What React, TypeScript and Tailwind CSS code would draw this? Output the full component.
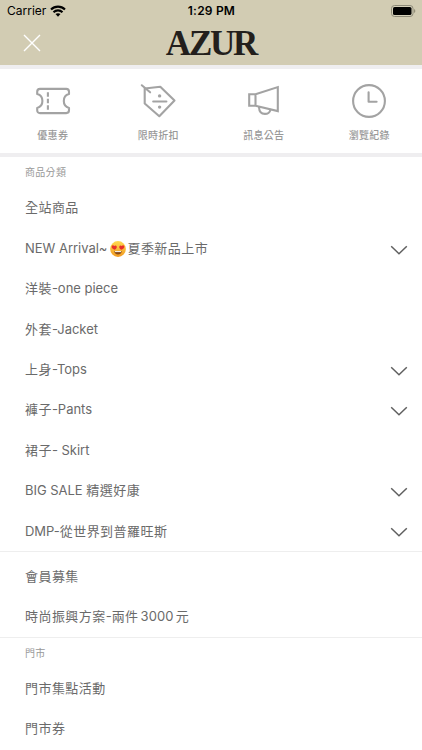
import { Fragment, type ReactNode } from 'react';
import clsx from 'clsx';

interface MenuItem {
  label: string;
  expandable?: boolean;
}

interface Shortcut {
  label: string;
  icon: ReactNode;
}

const iconProps = {
  width: 36,
  height: 36,
  viewBox: '0 0 36 36',
  fill: 'none',
  stroke: '#a3a3a3',
  strokeWidth: 2.1,
  strokeLinecap: 'round',
  strokeLinejoin: 'round',
} as const;

function TicketIcon() {
  return (
    <svg {...iconProps}>
      <path d="M5 5.900h26.200c1.800 0 2.800 1 2.800 2.800v2.400c-3 .8-5.200 3.500-5.200 6.900s2.200 6.100 5.200 6.900v2.400c0 1.800-1 2.800-2.800 2.800H5c-1.800 0-2.800-1-2.800-2.800v-2.400c3-.8 5.200-3.500 5.200-6.900s-2.200-6.100-5.200-6.900V8.700c0-1.800 1-2.800 2.800-2.800z" />
      <path d="M12.900 9.300v4.400M12.900 15.800v4.400M12.900 22.300v4.400" strokeLinecap="butt" />
    </svg>
  );
}

function DiscountIcon() {
  return (
    <svg {...iconProps}>
      <path d="M4.700 5.500L20.300 3.800l14.200 13.700-15.200 15.700L4.700 20.500z" />
      <path d="M1.800 2.300l8.300 7M13.200 18.500h13.200" />
      <circle cx="19.600" cy="12.900" r="1.700" fill="#a3a3a3" stroke="none" />
      <circle cx="19.600" cy="24.100" r="1.700" fill="#a3a3a3" stroke="none" />
    </svg>
  );
}

function MegaphoneIcon() {
  return (
    <svg {...iconProps} strokeLinejoin="miter">
      <path d="M3.200 11.200h6.300v11.600H3.200zM9.500 11.200l22.300-7.100v24L9.500 22.800" />
      <path d="M13 24.200c.2 4.500 2.600 6.700 5.900 6.700 2.800 0 4.800-1.400 5.500-4" />
    </svg>
  );
}

function HistoryIcon() {
  return (
    <svg {...iconProps}>
      <circle cx="18" cy="18" r="15.900" />
      <path d="M17.600 9.300v9.500h8" />
    </svg>
  );
}

function HeartEyes() {
  return (
    <svg width="16" height="16" viewBox="0 0 16 16" className="mr-px ml-[3px] shrink-0">
      <defs>
        <linearGradient id="face" x1="0" y1="0" x2="0" y2="1">
          <stop offset="0" stopColor="#ffd94f" />
          <stop offset="1" stopColor="#f29a22" />
        </linearGradient>
      </defs>
      <circle cx="8" cy="8" r="7.900" fill="url(#face)" />
      <path d="M4.300 10h7.400c0 2.200-1.500 3.400-3.700 3.400S4.300 12.200 4.300 10z" fill="#8a4a14" />
      <path d="M4.900 10.100h6.200v1H4.900z" fill="#fff" />
      <path d="M4.500 8.800C2.500 7.700 1.300 6.500 1.700 5.200c.4-1.100 1.800-1.200 2.500-.2.800-.9 2.200-.7 2.500.4.400 1.300-.5 2.400-2.200 3.400z" fill="#e8302b" />
      <path d="M11.500 8.800c2-1.100 3.200-2.300 2.800-3.600-.4-1.100-1.800-1.200-2.500-.2-.8-.9-2.200-.7-2.500.4-.4 1.300.5 2.400 2.200 3.400z" fill="#e8302b" />
    </svg>
  );
}

const SHORTCUTS: Shortcut[] = [
  { label: '優惠券', icon: <TicketIcon /> },
  { label: '限時折扣', icon: <DiscountIcon /> },
  { label: '訊息公告', icon: <MegaphoneIcon /> },
  { label: '瀏覽紀錄', icon: <HistoryIcon /> },
];

// ":heart_eyes:" is swapped for the drawn emoji
const CATEGORIES: MenuItem[] = [
  { label: '全站商品' },
  { label: 'NEW Arrival~:heart_eyes:夏季新品上市', expandable: true },
  { label: '洋裝-one piece' },
  { label: '外套-Jacket' },
  { label: '上身-Tops', expandable: true },
  { label: '褲子-Pants', expandable: true },
  { label: '裙子- Skirt' },
  { label: 'BIG SALE 精選好康', expandable: true },
  { label: 'DMP-從世界到普羅旺斯', expandable: true },
];

const CAMPAIGNS: MenuItem[] = [{ label: '會員募集' }, { label: '時尚振興方案-兩件3000元' }];

const STORES: MenuItem[] = [{ label: '門市集點活動' }, { label: '門市券' }];

// Latin runs sit tighter than the Chinese text around them
function Label({ text }: { text: string }) {
  return (
    <span className="flex items-center text-[13px] tracking-[0.45px] whitespace-pre">
      {text.split(/(:heart_eyes:|\d+|[A-Za-z~\- ]+)/).map((part, i) => {
        if (part === ':heart_eyes:') return <HeartEyes key={i} />;
        if (/^\d/.test(part)) return <span key={i} className="mr-[2px] ml-[2px] tracking-[0.1px]">{part}</span>;
        if (/^[A-Za-z\- ]/.test(part)) return <span key={i} className="tracking-[-0.02px]">{part}</span>;
        return <Fragment key={i}>{part}</Fragment>;
      })}
    </span>
  );
}

function StatusBar() {
  return (
    <div className="grid h-[22px] grid-cols-3 items-center pr-[6px] pl-[7px] text-black">
      <div className="flex items-center gap-[4px] text-[12px]">
        Carrier
        <svg width="16" height="12" viewBox="0 0 16 12" fill="none" stroke="#000" strokeWidth="2.100">
          <path d="M1 4.600c3.900-4 10.100-4 14 0M3.500 7.200c2.500-2.500 6.500-2.500 9 0" />
          <path d="M5.500 9.100c1.400-1.300 3.600-1.300 5 0L8 11.700z" fill="#000" stroke="none" />
        </svg>
      </div>
      <div className="text-center text-[12px] font-semibold tracking-[0.2px]">1:29 PM</div>
      <div className="flex justify-end">
        <svg width="25" height="12" viewBox="0 0 25 12">
          <rect x=".5" y=".5" width="21.500" height="11" rx="3" fill="#d5d0b9" stroke="#8d8a78" />
          <rect x="2" y="2" width="18.500" height="8" rx="1.600" fill="#000" />
          <path d="M23.300 4v4c1.300-.7 1.300-3.300 0-4z" fill="#77745f" />
        </svg>
      </div>
    </div>
  );
}

function Menu({ items, className }: { items: MenuItem[]; className?: string }) {
  return (
    <ul className={clsx('pr-[14px] pl-[25px]', className)}>
      {items.map(item => (
        <li key={item.label} className="flex h-[40.4px] items-center justify-between">
          <Label text={item.label} />
          {item.expandable && (
            <svg width="18" height="10" viewBox="0 0 18 10" className="mt-[2px]" fill="none" stroke="#606060" strokeWidth="1.500">
              <path d="M1.200 1.200L9 8.700l7.800-7.500" />
            </svg>
          )}
        </li>
      ))}
    </ul>
  );
}

export default function App() {
  return (
    <div className="h-[750px] w-[422px] overflow-hidden bg-white font-['Inter','Noto_Sans_CJK_TC',sans-serif] text-[#6a6a6a]">
      <header className="h-[65px] bg-[#d2ccb3]">
        <StatusBar />
        <div className="grid h-[43px] grid-cols-[1fr_auto_1fr] items-center">
          <svg width="18" height="18" viewBox="0 0 18 18" className="-mt-[2px] ml-[23px]" stroke="#fff" strokeWidth="1.400">
            <path d="M1 1l16 16M17 1L1 17" />
          </svg>
          <h1 className="-mt-px text-center font-['Liberation_Serif',serif] text-[35px] leading-[43px] font-bold tracking-[-2.2px] text-[#231f1c]">AZUR</h1>
        </div>
      </header>

      <nav className="grid h-[92px] grid-cols-4 border-y-4 border-[#efeef0] pt-[14px]">
        {SHORTCUTS.map(s => (
          <div key={s.label} className="flex flex-col items-center">
            {s.icon}
            <span className="mt-[8px] text-[10px] leading-[16px] font-medium tracking-[0.3px] text-[#999]">{s.label}</span>
          </div>
        ))}
      </nav>

      <h2 className="h-[31px] pl-[25px] text-[10px] leading-[31px] tracking-[0.3px] text-[#999]">商品分類</h2>
      <Menu items={CATEGORIES} className="-mb-px" />
      <Menu items={CAMPAIGNS} className="border-y border-[#eee] pt-[5px]" />
      <h2 className="h-[30px] pl-[25px] text-[10px] leading-[31px] tracking-[0.3px] text-[#999]">門市</h2>
      <Menu items={STORES} />
    </div>
  );
}
